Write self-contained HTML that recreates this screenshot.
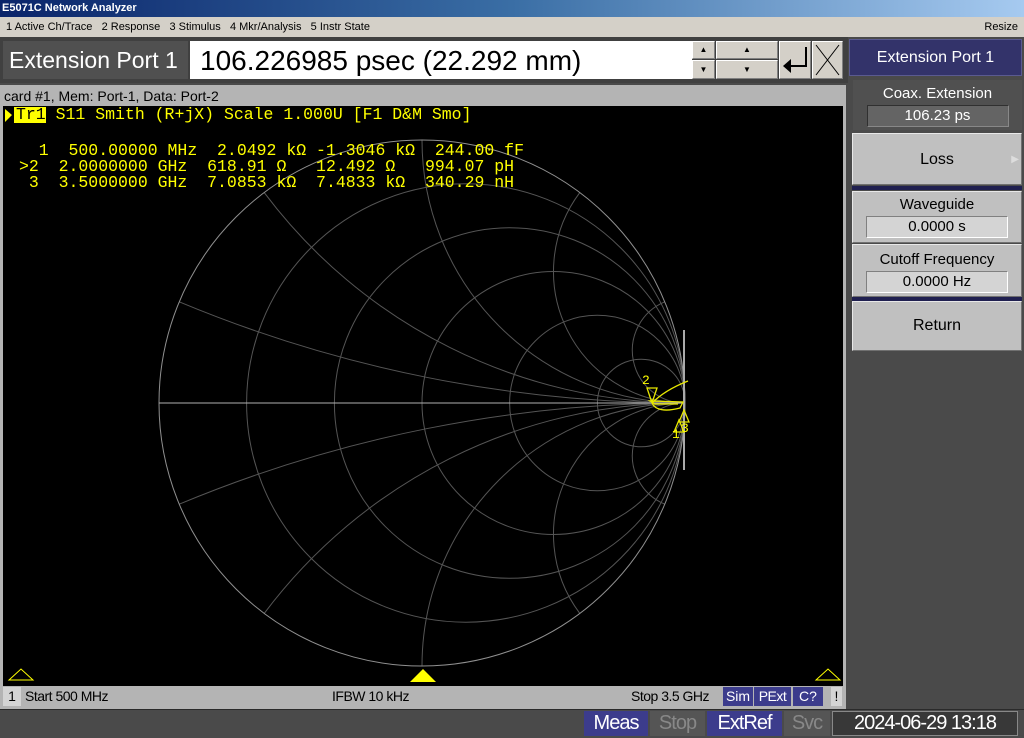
<!DOCTYPE html>
<html><head><meta charset="utf-8"><style>
*{margin:0;padding:0;box-sizing:border-box}
body{width:1024px;height:738px;overflow:hidden;background:#4a4a4a;font-family:"Liberation Sans",sans-serif;position:relative}
.a{position:absolute}
.btn{background:#d4d0c8;border:1px solid;border-color:#fff #808080 #808080 #fff}
.rb{position:absolute;left:852px;width:170px;background:#c0c0c0;border:1px solid;border-color:#e8e8e8 #707070 #707070 #e8e8e8;text-align:center;color:#000;font-size:15px}
.vb{margin:3px auto 0;width:142px;height:22px;background:#d4d4d4;border:1px solid;border-color:#808080 #fff #fff #808080;font-size:15px;line-height:20px}
.mono{font-family:"Liberation Mono",monospace;font-size:16.5px;color:#ffff00;white-space:pre;line-height:16px}
.bb{position:absolute;top:711px;height:25px;font-size:20px;line-height:25px;text-align:center;color:#fff;letter-spacing:-1px}
</style></head><body>
<div class="a" style="left:0;top:0;width:1024px;height:17px;background:linear-gradient(90deg,#0a246a,#3a6ea5 50%,#a6caf0);color:#fff;font-weight:bold;font-size:11px;line-height:17px;padding-left:2px">E5071C Network Analyzer</div>
<div class="a" style="left:0;top:17px;width:1024px;height:20px;background:#d4d0c8;font-size:11px;line-height:20px;color:#000;padding-left:6px">1 Active Ch/Trace&nbsp;&nbsp; 2 Response&nbsp;&nbsp; 3 Stimulus&nbsp;&nbsp; 4 Mkr/Analysis&nbsp;&nbsp; 5 Instr State<span style="position:absolute;right:6px">Resize</span></div>
<div class="a" style="left:0;top:37px;width:848px;height:46px;background:#404040"></div>
<div class="a" style="left:3px;top:41px;width:185px;height:38px;background:#505050;color:#fff;font-size:23px;line-height:38px;padding-left:6px">Extension Port 1</div>
<div class="a" style="left:190px;top:41px;width:502px;height:38px;background:#fff;color:#000;font-size:28px;line-height:40px;padding-left:10px">106.226985 psec (22.292 mm)</div>
<div class="a btn" style="left:692px;top:41px;width:23px;height:18px;font-size:8px;text-align:center;line-height:16px">▲</div>
<div class="a btn" style="left:692px;top:60px;width:23px;height:19px;font-size:8px;text-align:center;line-height:18px">▼</div>
<div class="a btn" style="left:716px;top:41px;width:62px;height:18px;font-size:8px;text-align:center;line-height:16px">▲</div>
<div class="a btn" style="left:716px;top:60px;width:62px;height:19px;font-size:8px;text-align:center;line-height:18px">▼</div>
<div class="a btn" style="left:779px;top:41px;width:32px;height:38px"><svg width="30" height="36"><path d="M26 5V24H10" stroke="#000" stroke-width="2" fill="none"/><path d="M3 24L11 17V31Z" fill="#000"/></svg></div>
<div class="a btn" style="left:812px;top:41px;width:31px;height:38px"><svg width="29" height="36"><path d="M3 3L26 33M26 3L3 33" stroke="#000" stroke-width="1"/></svg></div>
<div class="a" style="left:0;top:85px;width:846px;height:624px;background:#b4b4b4"></div>
<div class="a" style="left:4px;top:87px;font-size:14px;line-height:18px;color:#000">card #1, Mem: Port-1, Data: Port-2</div>
<div class="a" style="left:3px;top:106px;width:840px;height:580px;background:#000"></div>
<svg class="a" style="left:0;top:0" width="846" height="700">
<g fill="none" stroke="#555" stroke-width="1">
<circle cx="465.8" cy="403" r="219.2"/><circle cx="509.7" cy="403" r="175.3"/><circle cx="553.5" cy="403" r="131.5"/><circle cx="597.3" cy="403" r="87.7"/><circle cx="641.2" cy="403" r="43.8"/>
<path d="M685 403A1315 1315 0 0 1 179.2 301.8M685 403A1315 1315 0 0 0 179.2 504.2"/>
<path d="M685 403A526 526 0 0 1 264.2 192.6M685 403A526 526 0 0 0 264.2 613.4"/>
<path d="M685 403A263 263 0 0 1 422 140M685 403A263 263 0 0 0 422 666"/>
<path d="M685 403A131.5 131.5 0 0 1 579.8 192.6M685 403A131.5 131.5 0 0 0 579.8 613.4"/>
<path d="M685 403A52.6 52.6 0 0 1 664.8 301.8M685 403A52.6 52.6 0 0 0 664.8 504.2"/>
</g>
<circle cx="422" cy="403" r="263" fill="none" stroke="#909090"/>
<line x1="159" y1="403" x2="685" y2="403" stroke="#b0b0b0"/>
<line x1="684" y1="330" x2="684" y2="470" stroke="#aaa" stroke-width="2"/>
<g fill="none" stroke="#e8e800" stroke-width="1.3">
<path d="M688 381C670 388 660 395 652 403C655 410 665 412 680 408L683 402L650 401L655 404L678 404"/>
<path d="M647 388h10l-4 12h-2z"/><path d="M679 420l-5 12h10z"/><path d="M684 410l-5 12h10z"/>
</g>
<text x="642" y="384" fill="#ff0" font-family="Liberation Mono" font-size="13">2</text>
<text x="672" y="438" fill="#ff0" font-family="Liberation Mono" font-size="13">1</text>
<text x="681" y="432" fill="#ff0" font-family="Liberation Mono" font-size="13">3</text>
<path d="M9 680L21 669L33 680Z" fill="none" stroke="#ff0"/>
<path d="M816 680L828 669L840 680Z" fill="none" stroke="#ff0"/>
<path d="M410 682L423 669L436 682Z" fill="#ff0"/>
<path d="M5 109L12 115L5 122Z" fill="#ff0"/>
</svg>
<div class="a" style="left:14px;top:107px;width:32px;height:16px;background:#ff0"></div>
<div class="a mono" style="left:16px;top:107px"><span style="color:#000">Tr1</span> S11 Smith (R+jX) Scale 1.000U [F1 D&amp;M Smo]</div>
<div class="a mono" style="left:19px;top:143px">  1  500.00000 MHz  2.0492 kΩ -1.3046 kΩ  244.00 fF
>2  2.0000000 GHz  618.91 Ω   12.492 Ω   994.07 pH
 3  3.5000000 GHz  7.0853 kΩ  7.4833 kΩ  340.29 nH</div>
<div class="a" style="left:3px;top:687px;width:18px;height:19px;background:#d4d4d4;font-size:14px;text-align:center;line-height:19px">1</div>
<div class="a" style="left:25px;top:687px;font-size:14px;line-height:19px;letter-spacing:-0.5px">Start 500 MHz</div>
<div class="a" style="left:332px;top:687px;font-size:14px;line-height:19px;letter-spacing:-0.5px">IFBW 10 kHz</div>
<div class="a" style="left:631px;top:687px;font-size:14px;line-height:19px;letter-spacing:-0.5px">Stop 3.5 GHz</div>
<div class="a" style="left:723px;top:687px;width:30px;height:19px;background:#3c3c8c;color:#fff;font-size:14px;line-height:19px;text-align:center">Sim</div>
<div class="a" style="left:754px;top:687px;width:37px;height:19px;background:#3c3c8c;color:#fff;font-size:14px;line-height:19px;text-align:center;letter-spacing:-0.5px">PExt</div>
<div class="a" style="left:793px;top:687px;width:30px;height:19px;background:#3c3c8c;color:#fff;font-size:14px;line-height:19px;text-align:center">C?</div>
<div class="a" style="left:831px;top:687px;width:11px;height:19px;background:#d4d4d4;font-size:14px;line-height:19px;text-align:center">!</div>
<div class="a" style="left:0;top:709px;width:1024px;height:29px;background:#4a4a4a;border-top:1px solid #2a2a2a"></div>
<div class="bb" style="left:584px;width:64px;background:#3c3c8c">Meas</div>
<div class="bb" style="left:650px;width:55px;background:#555;color:#888">Stop</div>
<div class="bb" style="left:707px;width:75px;background:#3c3c8c">ExtRef</div>
<div class="bb" style="left:784px;width:46px;background:#555;color:#888">Svc</div>
<div class="bb" style="left:832px;width:186px;background:#383838;border:1px solid #888;line-height:23px">2024-06-29 13:18</div>
<div class="a" style="left:848px;top:37px;width:176px;height:672px;background:#4a4a4a"></div>
<div class="a" style="left:849px;top:39px;width:173px;height:37px;background:#33336a;border:1px solid #5a5a90;color:#fff;font-size:16px;line-height:36px;text-align:center">Extension Port 1</div>
<div class="a" style="left:853px;top:80px;width:169px;height:50px;background:#505050;color:#fff;text-align:center;font-size:15px;padding-top:5px">Coax. Extension<div class="vb" style="background:#646464;color:#fff;border-color:#303030 #888 #888 #303030">106.23 ps</div></div>
<div class="rb" style="top:133px;height:52px;line-height:52px;font-size:16px">Loss<span style="position:absolute;right:2px;color:#ddd;font-size:10px">▶</span></div>
<div class="a" style="left:852px;top:186px;width:170px;height:4px;background:#202050"></div>
<div class="rb" style="top:191px;height:52px;padding-top:4px">Waveguide<div class="vb">0.0000 s</div></div>
<div class="rb" style="top:244px;height:53px;padding-top:6px">Cutoff Frequency<div class="vb">0.0000 Hz</div></div>
<div class="a" style="left:852px;top:297px;width:170px;height:4px;background:#202050"></div>
<div class="rb" style="top:301px;height:50px;line-height:48px;font-size:16px">Return</div>
</body></html>
